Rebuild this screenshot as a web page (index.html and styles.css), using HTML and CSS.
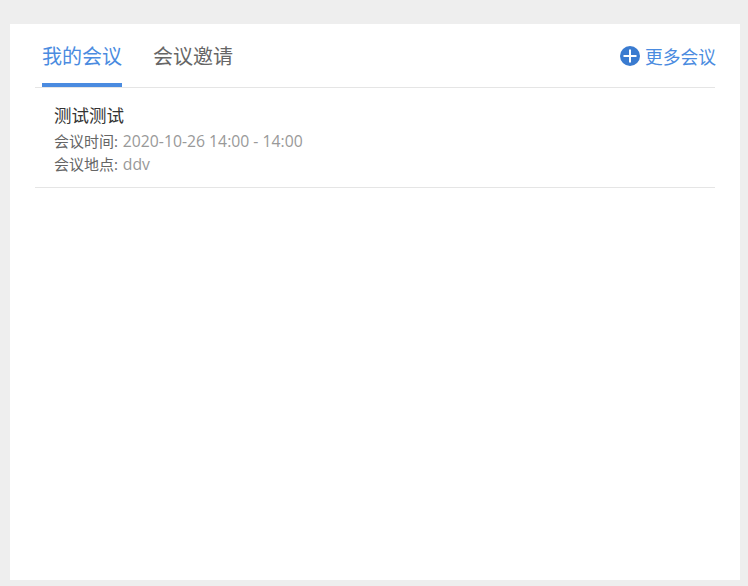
FILE: index.html
```
<!DOCTYPE html>
<html lang="zh-CN">
<head>
<meta charset="utf-8">
<title>我的会议</title>
<link rel="stylesheet" href="styles.css">
</head>
<body>
<main class="card">
  <header class="tabs">
    <div class="tab-list">
      <a class="tab active">我的会议</a>
      <a class="tab">会议邀请</a>
    </div>
    <a class="more">
      <svg class="more-icon" width="20" height="20" viewBox="0 0 20 20"><circle cx="10" cy="10" r="10" fill="#3a7bd0"/><path d="M10 3.5v13M3.5 10h13" stroke="#fff" stroke-width="2" fill="none"/></svg>
      <span>更多会议</span>
    </a>
  </header>
  <article class="meeting">
    <h2 class="title">测试测试</h2>
    <p class="row">会议时间: <span class="value">2020-10-26 14:00 - 14:00</span></p>
    <p class="row">会议地点: <span class="value">ddv</span></p>
  </article>
</main>
</body>
</html>
```
FILE: styles.css
```
html, body { margin: 0; height: 100%; }
body {
  background: #eee;
  padding: 24px 8px 6px 10px;
  box-sizing: border-box;
  font-family: "Noto Sans CJK SC", "Liberation Sans", sans-serif;
  overflow: hidden;
}
.card {
  background: #fff;
  height: 556px;
  padding: 0 25px;
  box-sizing: border-box;
}
.tabs {
  display: flex;
  justify-content: space-between;
  align-items: center;
  height: 63px;
  border-bottom: 1px solid #e5e5e5;
}
.tab-list { display: flex; gap: 31px; padding-left: 7px; height: 100%; }
.tab {
  font-size: 20px;
  line-height: 63px;
  color: #666;
  height: 59px;
  border-bottom: 4px solid transparent;
}
.tab.active { color: #4a8be0; border-bottom-color: #4a8be0; }
.more { display: flex; align-items: center; gap: 5px; color: #4a8be0; font-size: 17.75px; line-height: 24px; margin-right: -1px; }
.more-icon { display: block; }
.meeting {
  height: 100px;
  padding: 14px 0 0 19px;
  box-sizing: border-box;
  border-bottom: 1px solid #e5e5e5;
}
.title { margin: 0 0 2px; font-size: 17.5px; line-height: 26px; font-weight: 400; color: #333; }
.row { margin: 0; font-family: "Open Sans", "Noto Sans CJK SC", sans-serif; font-size: 15px; line-height: 23px; color: #666; }
.value { margin-left: 1px; font-size: 15.75px; color: #999; }
```
